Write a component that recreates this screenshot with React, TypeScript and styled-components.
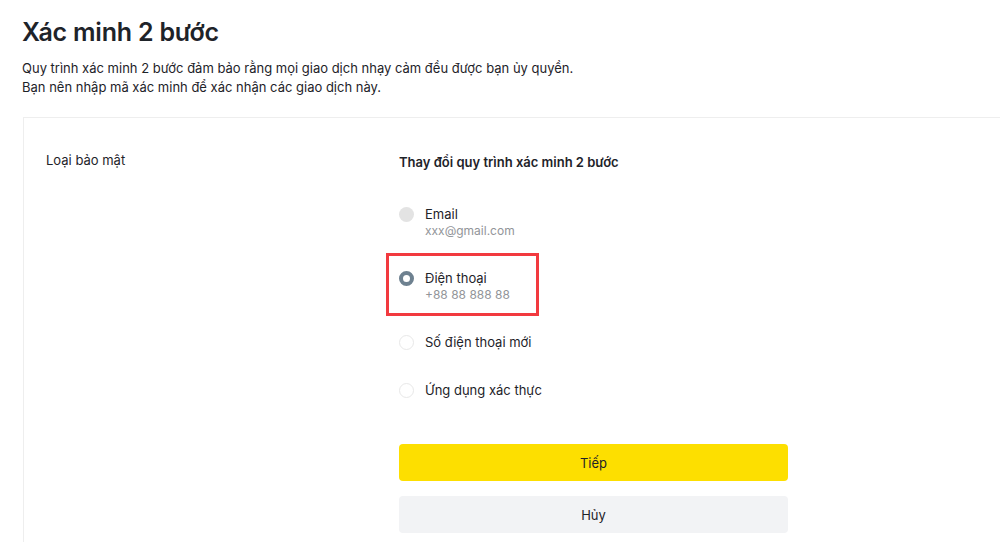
import React, { FC } from "react";
import styled, { createGlobalStyle } from "styled-components";

type RadioState = "disabled" | "checked" | "empty";

interface Option {
  label: string;
  sub?: string;
  state: RadioState;
  highlighted?: boolean;
}

const options: Option[] = [
  { label: "Email", sub: "xxx@gmail.com", state: "disabled" },
  { label: "Điện thoại", sub: "+88 88 888 88", state: "checked", highlighted: true },
  { label: "Số điện thoại mới", state: "empty" },
  { label: "Ứng dụng xác thực", state: "empty" },
];

const App: FC = () => {
  return (
    <>
      <GlobalStyle />
      <Page>
        <Title>Xác minh 2 bước</Title>
        <Description>
          Quy trình xác minh 2 bước đảm bảo rằng mọi giao dịch nhạy cảm đều được bạn ủy quyền.
          <br />
          Bạn nên nhập mã xác minh để xác nhận các giao dịch này.
        </Description>
        <Card>
          <SideLabel>Loại bảo mật</SideLabel>
          <Main>
            <Heading>Thay đổi quy trình xác minh 2 bước</Heading>
            <OptionList>
              {options.map((o) => (
                <OptionRow key={o.label} $highlighted={o.highlighted}>
                  <Radio $state={o.state} />
                  <OptionText>
                    <OptionLabel>{o.label}</OptionLabel>
                    {o.sub && <OptionSub>{o.sub}</OptionSub>}
                  </OptionText>
                </OptionRow>
              ))}
            </OptionList>
            <Actions>
              <Button $primary>Tiếp</Button>
              <Button>Hủy</Button>
            </Actions>
          </Main>
        </Card>
      </Page>
    </>
  );
};

const GlobalStyle = createGlobalStyle`
  html, body {
    margin: 0;
    padding: 0;
    background: #ffffff;
    overflow: hidden;
  }
  body {
    font-family: Inter, "Noto Sans", "Liberation Sans", sans-serif;
    color: #1e2329;
  }
`;

const Page = styled.div`
  padding: 15px 0 0 22px;
  width: 1000px;
  height: 542px;
  box-sizing: border-box;
  overflow: hidden;
`;

const Title = styled.h1`
  margin: 0;
  font-size: 25px;
  line-height: 34px;
  font-weight: 600;
  letter-spacing: -0.2px;
  color: #1e2329;
`;

const Description = styled.p`
  margin: 10px 0 0;
  font-size: 13px;
  line-height: 19px;
  color: #1e2329;
`;

const Card = styled.div`
  margin-top: 20px;
  margin-left: 1px;
  width: 1100px;
  border: 1px solid #eeeeee;
  border-right: none;
  border-bottom: none;
  display: grid;
  grid-template-columns: 353px 1fr;
  padding: 33px 0 0 22px;
  box-sizing: border-box;
  height: 500px;
`;

const SideLabel = styled.div`
  font-size: 13px;
  line-height: 18px;
  color: #1e2329;
`;

const Main = styled.div`
  display: flex;
  flex-direction: column;
  padding-top: 2px;
`;

const Heading = styled.div`
  font-size: 13px;
  line-height: 18px;
  font-weight: 600;
  color: #1e2329;
`;

const OptionList = styled.div`
  display: flex;
  flex-direction: column;
  gap: 30px;
  margin-top: 34px;
`;

const OptionRow = styled.div<{ $highlighted?: boolean }>`
  position: relative;
  display: flex;
  align-items: flex-start;
  gap: 11px;

  ${({ $highlighted }) =>
    $highlighted &&
    `
    &::after {
      content: "";
      position: absolute;
      left: -13px;
      top: -16px;
      width: 147px;
      height: 57px;
      border: 3px solid #f23a3f;
      pointer-events: none;
    }
  `}
`;

const Radio = styled.span<{ $state: RadioState }>`
  flex: none;
  width: 15px;
  height: 15px;
  margin-top: 1.5px;
  border-radius: 50%;
  box-sizing: border-box;
  background: ${({ $state }) => ($state === "disabled" ? "#e3e3e3" : "#ffffff")};
  border: ${({ $state }) =>
    $state === "checked"
      ? "4.5px solid #6e8190"
      : $state === "empty"
      ? "1px solid #e8e8e8"
      : "none"};
`;

const OptionText = styled.div`
  display: flex;
  flex-direction: column;
`;

const OptionLabel = styled.div`
  font-size: 13px;
  line-height: 18px;
  color: #1e2329;
`;

const OptionSub = styled.div`
  font-size: 12px;
  line-height: 16px;
  color: #929599;
`;

const Actions = styled.div`
  display: flex;
  flex-direction: column;
  gap: 15px;
  margin-top: 45px;
  width: 389px;
`;

const Button = styled.button<{ $primary?: boolean }>`
  height: 37px;
  border: none;
  border-radius: 4px;
  font-family: inherit;
  font-size: 13px;
  font-weight: 400;
  color: #1e2329;
  background: ${({ $primary }) => ($primary ? "#fddf00" : "#f2f3f5")};
  cursor: pointer;
`;

export default App;
